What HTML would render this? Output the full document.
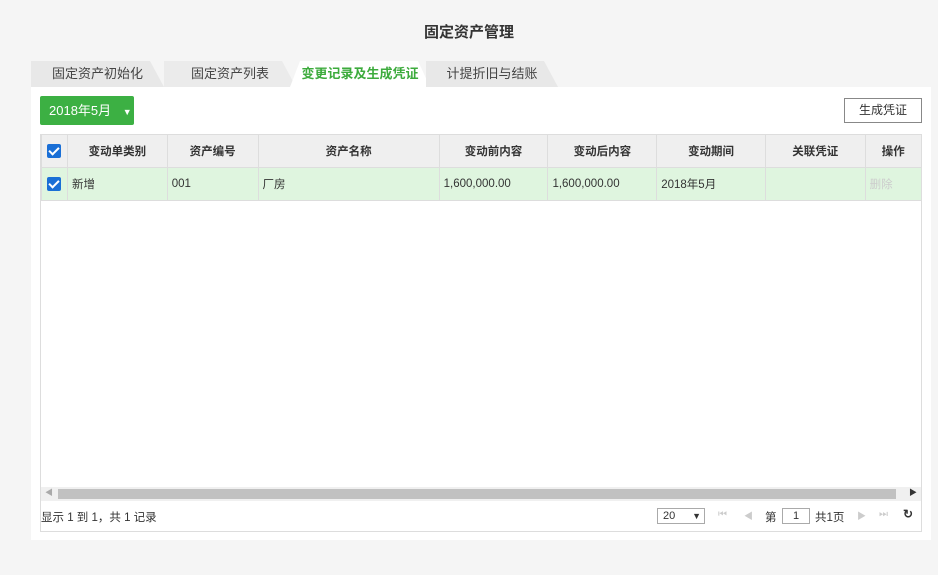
<!DOCTYPE html>
<html><head><meta charset="utf-8"><style>
*{box-sizing:border-box;margin:0;padding:0}
body{width:938px;height:575px;background:#f5f5f5;font-family:"Liberation Sans","Noto Sans CJK SC",sans-serif;font-size:12px;color:#333;position:relative;overflow:hidden}
.abs{position:absolute}
.title{left:0;width:938px;top:21px;text-align:center;font-size:15px;font-weight:bold;color:#333}
.tab{top:61px;height:26px;line-height:26px;font-size:13px;color:#444;background:#e8e8e8;text-align:center;clip-path:polygon(0 100%,0 0,calc(100% - 14px) 0,100% 100%)}
.panel{left:31px;top:87px;width:900px;height:453px;background:#fff}
.btn{left:40px;top:96px;width:94px;height:29px;background:#3cb043;border-radius:2px;color:#fff;font-size:13px;line-height:29px;padding-left:9px}
.btn2{left:844px;top:98px;width:78px;height:25px;border:1px solid #888;background:#fff;text-align:center;line-height:23px;font-size:12px}
.grid{left:40px;top:134px;width:882px;height:398px;border:1px solid #ddd}
table{border-collapse:collapse;position:absolute;left:0;top:0;table-layout:fixed}
td{border:1px solid #ddd;padding:0 4px;font-size:11.5px;white-space:nowrap;overflow:hidden;vertical-align:middle}
thead td{background:#efefef;text-align:center;font-weight:bold;color:#333;border-top:none;height:32px}
tbody td{background:#dff5df;height:33px}
.cb{width:14px;height:14px;background:#1a6fd6;border-radius:2px;display:inline-block;position:relative;vertical-align:middle}
.cb:after{content:"";position:absolute;left:4px;top:1px;width:4px;height:8px;border:solid #fff;border-width:0 2px 2px 0;transform:rotate(45deg)}
.sb{left:0;top:352px;width:880px;height:14px;background:#f0f0f0}
.thumb{left:17px;top:2px;width:838px;height:10px;background:#c1c1c1}
</style></head><body>
<div class="abs title">固定资产管理</div>
<div class="abs tab" style="left:31px;width:133px">固定资产初始化</div>
<div class="abs tab" style="left:164px;width:132px;background:#ebebeb">固定资产列表</div>
<div class="abs tab" style="left:290px;width:140px;background:#fff;color:#3cab3c;font-weight:bold;clip-path:polygon(0 100%,10px 0,calc(100% - 12px) 0,100% 100%)">变更记录及生成凭证</div>
<div class="abs tab" style="left:426px;width:132px">计提折旧与结账</div>
<div class="abs panel"></div>
<div class="abs btn">2018年5月 <span style="font-size:9px;margin-left:8px">▼</span></div>
<div class="abs btn2">生成凭证</div>
<div class="abs grid">
<table>
<colgroup><col style="width:26px"><col style="width:100px"><col style="width:91px"><col style="width:182px"><col style="width:109px"><col style="width:109px"><col style="width:109px"><col style="width:100px"><col style="width:56px"></colgroup>
<thead><tr><td style="padding:0 5px"><span class="cb"></span></td><td>变动单类别</td><td>资产编号</td><td>资产名称</td><td>变动前内容</td><td>变动后内容</td><td>变动期间</td><td>关联凭证</td><td style="border-right:none">操作</td></tr></thead>
<tbody><tr><td style="padding:0 5px"><span class="cb"></span></td><td>新增</td><td>001</td><td>厂房</td><td>1,600,000.00</td><td>1,600,000.00</td><td>2018年5月</td><td></td><td style="color:#ccc;border-right:none">删除</td></tr></tbody>
</table>
<div class="abs sb"><div class="abs thumb"></div><span class="abs" style="left:4px;top:0;font-size:8px;color:#aaa">◀</span><span class="abs" style="right:4px;top:0;font-size:8px;color:#333">▶</span></div>
<div class="abs" style="left:0;top:374px;font-size:11.5px">显示 1 到 1，共 1 记录</div>
<div class="abs" style="left:616px;top:373px;width:48px;height:16px;border:1px solid #aaa;font-size:11px;line-height:14px;padding-left:5px">20 <span style="float:right;margin-right:3px;font-size:9px">▼</span></div>
<div class="abs" style="left:677px;top:374px;color:#ccc;font-size:10px">⏮</div>
<div class="abs" style="left:703px;top:374px;color:#ccc;font-size:9px">◀</div>
<div class="abs" style="left:724px;top:374px;font-size:11.5px">第</div>
<div class="abs" style="left:741px;top:373px;width:28px;height:16px;border:1px solid #aaa;text-align:center;font-size:11px;line-height:14px">1</div>
<div class="abs" style="left:774px;top:374px;font-size:11.5px">共1页</div>
<div class="abs" style="left:816px;top:374px;color:#ccc;font-size:9px">▶</div>
<div class="abs" style="left:838px;top:374px;color:#ccc;font-size:10px">⏭</div>
<div class="abs" style="left:862px;top:372px;font-weight:bold;font-size:12px">↻</div>
</div>
</body></html>
